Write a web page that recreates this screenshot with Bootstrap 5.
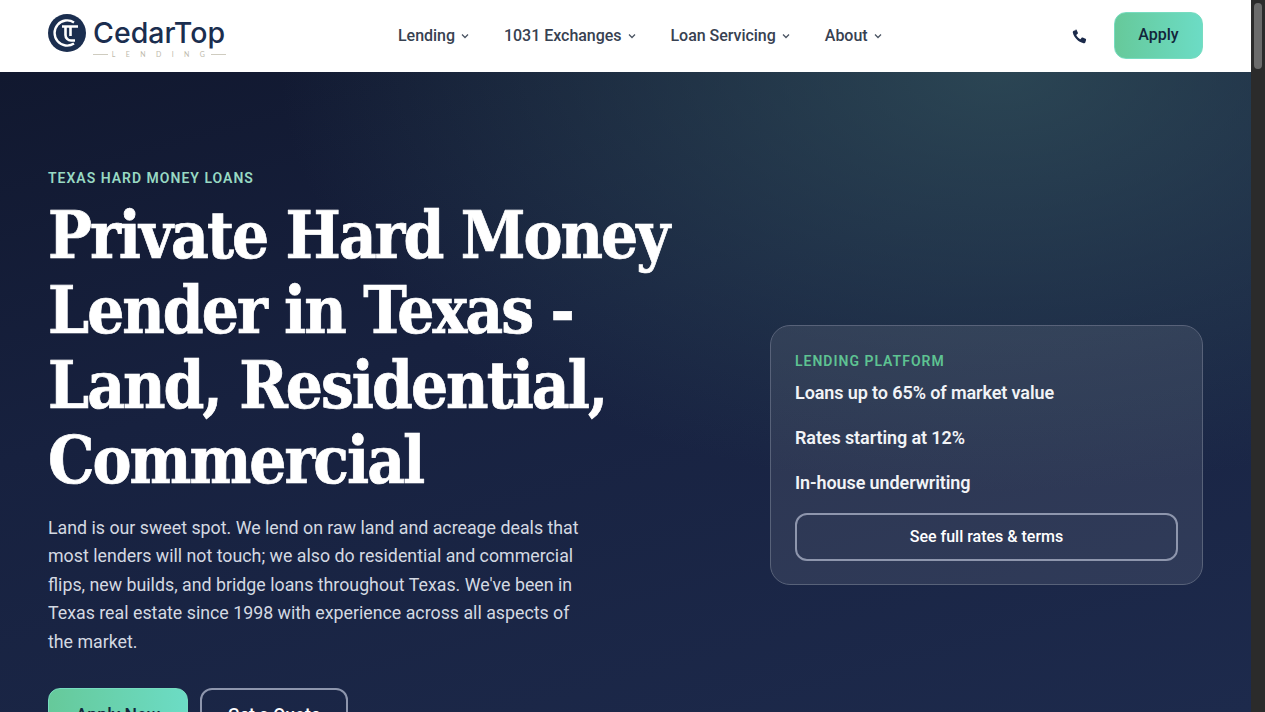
<!DOCTYPE html>
<html lang="en">
<head>
  <meta charset="UTF-8" />
  <title>CedarTop Lending</title>
  <meta name="viewport" content="width=device-width, initial-scale=1" />
  <link href="https://cdn.jsdelivr.net/npm/bootstrap@5.3.0/dist/css/bootstrap.min.css" rel="stylesheet" />
  <style>
    html, body { height: 100%; overflow: hidden; }
    body { font-family: Roboto, "Liberation Sans", sans-serif; background: #1c2748; }
    .app-shell { height: 712px; overflow: hidden; }
    .page-main { width: 1251px; flex: 0 0 1251px; }
    .fake-scroll { width: 14px; flex: 0 0 14px; background: #2b2b2b; padding: 3px; }
    .fake-thumb { height: 66px; border-radius: 4px; background: #6b6b6b; }

    .top-nav { height: 72px; padding: 0 48px; background: #fff; }
    .brand-link { align-self: flex-start; padding-top: 14px; gap: 7px; width: 178px; }
    .brand-word { font-family: Inter, Lato, sans-serif; font-size: 28.5px; line-height: 32px; margin-top: 3px; color: #1b2e4f; font-weight: 500; letter-spacing: 0; }
    .brand-sub { font-size: 7px; line-height: 8px; letter-spacing: 10.4px; margin-right: -8px; color: #bdb9ab; font-family: Lato, sans-serif; }
    .brand-rule { height: 1px; background: #cfccc0; flex: 1 1 auto; }
    .brand-lines { margin-top: 1px; }
    .menu-link { font-size: 16px; font-weight: 500; color: #374151; text-decoration: none; letter-spacing: -.03px; gap: 6px; }
    .menu-row { gap: 35px; margin-left: 172px; }
    .phone-link { color: #1b2a4a; margin-right: 27px; line-height: 0; }
    .btn-apply { background: linear-gradient(90deg, #66c99a, #6cdcc5); color: #12263a; font-weight: 500; border: 1px solid #77dcc0; }
    .btn-apply:hover { color: #12263a; }
    .apply-top { width: 89px; height: 47px; font-size: 16px; border-radius: 12px; margin-bottom: 2px; }

    .hero { height: 640px; padding: 0 48px; overflow: visible;
      background:
        radial-gradient(ellipse 720px 420px at 1000px 0px, rgba(50, 82, 92, .75), rgba(50, 82, 92, 0)),
        linear-gradient(165deg, #11182f 0%, #17213f 40%, #1d2a4c 100%); }
    .hero-grid { display: grid; grid-template-columns: 640px 433px; justify-content: space-between; align-items: center; padding-top: 97px; }
    .eyebrow { font-size: 14px; line-height: 18px; font-weight: 600; letter-spacing: 1px; color: #98d9c3; margin-bottom: 11px; }
    .hero-title { font-family: "DejaVu Serif Condensed", "DejaVu Serif", serif; font-weight: 700; font-size: 65px; line-height: 75px; letter-spacing: -2px; color: #fff; -webkit-text-stroke: .7px #fff; margin-bottom: 16px; white-space: nowrap; }
    .hero-copy { font-size: 17.8px; line-height: 28.4px; color: #d4d9e2; width: 545px; margin-bottom: 32px; }
    .cta-solid { width: 140px; height: 55px; font-size: 17.6px; border-radius: 12px; }
    .cta-line { width: 148px; height: 55px; font-size: 17.6px; font-weight: 500; border-radius: 12px; color: #fff; border: 2px solid #8e96ad; background: transparent; }

    .plat-card { height: 260px; padding: 26px 24px 24px; border-radius: 20px; border: 1px solid #586279; background: rgba(255, 255, 255, .09); margin-top: -2px; }
    .plat-label { font-size: 14px; line-height: 18px; font-weight: 600; letter-spacing: 1px; color: #5ec392; margin-bottom: 11px; }
    .plat-item { font-size: 18px; line-height: 24px; font-weight: 600; letter-spacing: -.1px; color: #f1f3f6; margin-bottom: 20.8px; }
    .plat-btn { height: 48px; font-size: 16px; font-weight: 500; border-radius: 12px; color: #fff; border: 2px solid #8e96ad; background: transparent; margin-top: -2.2px; }
  </style>
</head>
<body>
<div class="app-shell d-flex">
  <div class="page-main">
    <nav class="top-nav d-flex align-items-center">
      <a href="#" class="brand-link d-flex text-decoration-none">
        <svg width="38" height="38" viewBox="0 0 38 38" class="flex-shrink-0" aria-hidden="true">
          <circle cx="19" cy="19" r="19" fill="#1b2e4f" />
          <path d="M26 8.4A12.6 12.6 0 1 0 26 29.6" fill="none" stroke="#fff" stroke-width="2.4" />
          <path d="M14 12.5H30M17.5 12.5V21a5.5 5.5 0 0 0 5.5 5.5h4M22.5 12.5V22" fill="none" stroke="#fff" stroke-width="2.6" />
        </svg>
        <div class="flex-grow-1">
          <div class="brand-word">CedarTop</div>
          <div class="brand-lines d-flex align-items-center gap-1">
            <span class="brand-rule"></span><span class="brand-sub">LENDING</span><span class="brand-rule"></span>
          </div>
        </div>
      </a>
      <div class="menu-row d-flex align-items-center">
        <a class="menu-link d-flex align-items-center" href="#">Lending <svg width="8" height="6" viewBox="0 0 8 6"><path d="M1 1.5 4 4.5 7 1.5" fill="none" stroke="#4b5563" stroke-width="1.3" /></svg></a>
        <a class="menu-link d-flex align-items-center" href="#">1031 Exchanges <svg width="8" height="6" viewBox="0 0 8 6"><path d="M1 1.5 4 4.5 7 1.5" fill="none" stroke="#4b5563" stroke-width="1.3" /></svg></a>
        <a class="menu-link d-flex align-items-center" href="#">Loan Servicing <svg width="8" height="6" viewBox="0 0 8 6"><path d="M1 1.5 4 4.5 7 1.5" fill="none" stroke="#4b5563" stroke-width="1.3" /></svg></a>
        <a class="menu-link d-flex align-items-center" href="#">About <svg width="8" height="6" viewBox="0 0 8 6"><path d="M1 1.5 4 4.5 7 1.5" fill="none" stroke="#4b5563" stroke-width="1.3" /></svg></a>
      </div>
      <div class="ms-auto d-flex align-items-center">
        <a href="#" class="phone-link" aria-label="Call">
          <svg width="15" height="15" viewBox="0 0 24 24"><path fill="currentColor" d="M6.6 1.5 2.9 2.6C1.7 3 1 4.2 1.3 5.6 3.2 13.8 10.2 20.8 18.4 22.7c1.4.3 2.6-.4 3-1.6l1.1-3.7c.2-.7-.1-1.4-.8-1.7l-4.6-2c-.6-.3-1.3-.1-1.7.4l-1.9 2.3c-2.9-1.5-5.3-3.9-6.8-6.8l2.3-1.9c.5-.4.7-1.1.4-1.7l-2-4.6c-.3-.7-1.1-1-1.8-.8Z" /></svg>
        </a>
        <a href="#" class="btn btn-apply apply-top d-flex align-items-center justify-content-center p-0">Apply</a>
      </div>
    </nav>

    <section class="hero">
      <div class="hero-grid">
        <div>
          <div class="eyebrow">TEXAS HARD MONEY LOANS</div>
          <h1 class="hero-title">Private Hard Money<br>Lender in Texas -<br>Land, Residential,<br>Commercial</h1>
          <p class="hero-copy">Land is our sweet spot. We lend on raw land and acreage deals that most lenders will not touch; we also do residential and commercial flips, new builds, and bridge loans throughout Texas. We've been in Texas real estate since 1998 with experience across all aspects of the market.</p>
          <div class="d-flex gap-2">
            <a href="#" class="btn btn-apply cta-solid d-flex align-items-center justify-content-center p-0">Apply Now</a>
            <a href="#" class="btn cta-line ms-1 d-flex align-items-center justify-content-center p-0">Get a Quote</a>
          </div>
        </div>
        <div class="plat-card">
          <div class="plat-label">LENDING PLATFORM</div>
          <div class="plat-item">Loans up to 65% of market value</div>
          <div class="plat-item">Rates starting at 12%</div>
          <div class="plat-item">In-house underwriting</div>
          <a href="#" class="btn plat-btn w-100 d-flex align-items-center justify-content-center p-0">See full rates &amp; terms</a>
        </div>
      </div>
    </section>
  </div>
  <div class="fake-scroll"><div class="fake-thumb"></div></div>
</div>
<script src="https://cdn.jsdelivr.net/npm/bootstrap@5.3.0/dist/js/bootstrap.bundle.min.js"></script>
</body>
</html>
